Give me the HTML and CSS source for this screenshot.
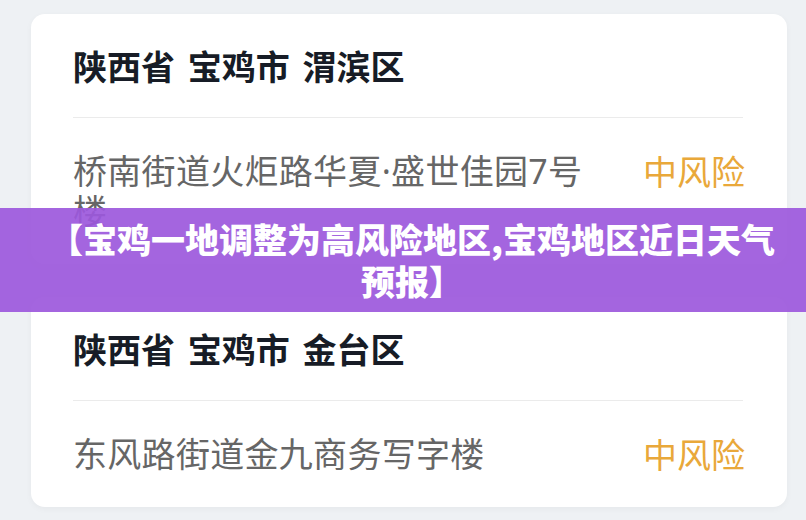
FILE: index.html
```html
<!DOCTYPE html>
<html lang="zh-CN">
<head>
    <meta charset="UTF-8">
    <meta name="viewport" content="width=device-width, initial-scale=1.0">
    <title>宝鸡风险地区</title>
    <link rel="stylesheet" href="styles.css">
</head>
<body>

<div class="list">
    <div class="card">
        <div class="area">陕西省 宝鸡市 渭滨区</div>
        <div class="row">
            <div class="addr">桥南街道火炬路华夏·盛世佳园7号楼</div>
            <div class="level">中风险</div>
        </div>
    </div>

    <div class="card">
        <div class="area">陕西省 宝鸡市 金台区</div>
        <div class="row">
            <div class="addr">东风路街道金九商务写字楼</div>
            <div class="level">中风险</div>
        </div>
    </div>
</div>

<div class="banner">【宝鸡一地调整为高风险地区,宝鸡地区近日天气预报】</div>

</body>
</html>
```

FILE: styles.css
```css
body {
    margin: 0;
    padding: 0;
    background-color: #eef1f4;
    font-family: "Noto Sans CJK SC", "Noto Sans", sans-serif;
    width: 806px;
    height: 520px;
    overflow: hidden;
    position: relative;
}
.list {
    display: flex;
    flex-direction: column;
    gap: 33px;
    padding: 14px 19px 0 31px;
}
.card {
    background-color: #fff;
    border-radius: 14px;
    padding: 0 44px 0 42px;
    box-shadow: 0 2px 6px rgba(0, 0, 0, 0.04);
}
.area {
    height: 104px;
    display: flex;
    align-items: center;
    font-size: 34px;
    font-weight: 700;
    color: #171c26;
    word-spacing: 5px;
    border-bottom: 1px solid #ebebeb;
    box-sizing: border-box;
}
.row {
    display: flex;
    justify-content: space-between;
    align-items: flex-start;
    padding: 33px 0;
    line-height: 40px;
}
.addr {
    max-width: 522px;
    font-family: "Noto Sans", "Noto Sans CJK SC", sans-serif;
    font-size: 34px;
    letter-spacing: 0.3px;
    color: #666;
}
.level {
    font-size: 34px;
    color: #e9a83a;
    margin-right: -2px;
}
.banner {
    position: absolute;
    left: 0;
    top: 208px;
    width: 100%;
    height: 104px;
    box-sizing: border-box;
    padding: 10px 30px 10px 48px;
    background-color: rgba(156, 88, 220, 0.92);
    color: #fff;
    font-size: 34px;
    font-weight: 900;
    line-height: 42px;
    text-align: center;
}
```
